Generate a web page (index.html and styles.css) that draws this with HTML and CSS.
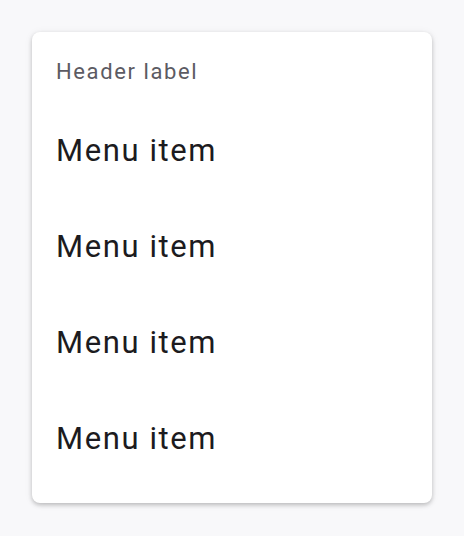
FILE: index.html
```html
<!DOCTYPE html>
<html>
<head>
<meta charset="utf-8">
<link rel="stylesheet" href="styles.css">
</head>
<body>
<div class="page">
  <div class="menu">
    <div class="menu-header">Header label</div>
    <div class="menu-item">Menu item</div>
    <div class="menu-item">Menu item</div>
    <div class="menu-item">Menu item</div>
    <div class="menu-item">Menu item</div>
  </div>
</div>
</body>
</html>
```
FILE: styles.css
```css
html, body {
  margin: 0;
  padding: 0;
  background: #f8f8fa;
}
.page {
  padding: 32px;
  font-family: Roboto, "Noto Sans", sans-serif;
}
.menu {
  width: 400px;
  box-sizing: border-box;
  background: #ffffff;
  border-radius: 8px;
  padding: 8px 0 16px;
  box-shadow: 0 2px 4px rgba(0,0,0,0.22), 0 1px 10px rgba(0,0,0,0.06);
}
.menu-header {
  height: 63px;
  line-height: 64px;
  padding: 0 24px;
  font-size: 22px;
  letter-spacing: 1.6px;
  color: #5c5b63;
}
.menu-item {
  height: 96px;
  line-height: 96px;
  padding: 0 24px;
  font-size: 31px;
  letter-spacing: 1.6px;
  color: #1c1b20;
}
```
